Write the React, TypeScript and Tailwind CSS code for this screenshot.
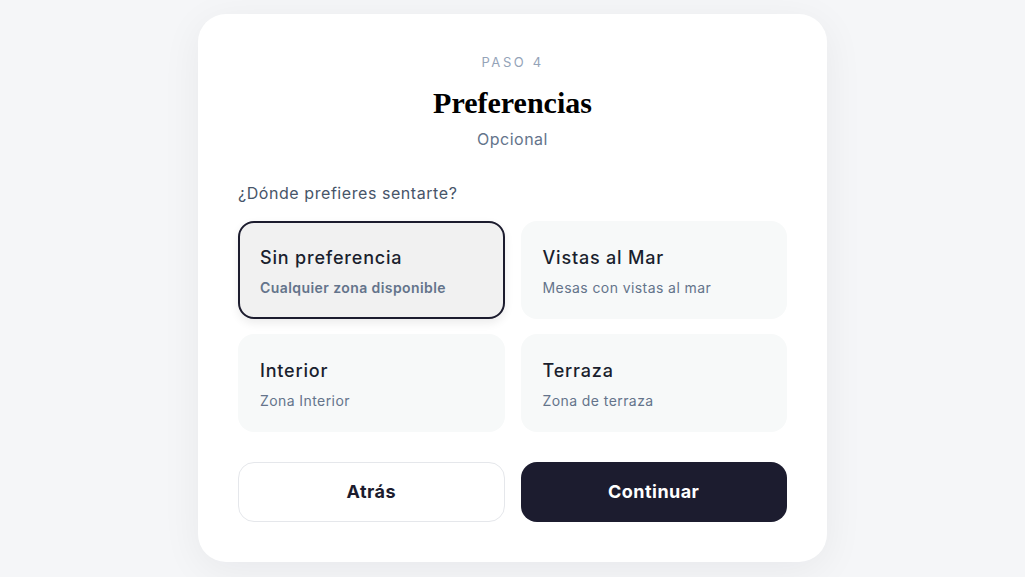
import { useState } from 'react'

const options = [
  { id: 'any', title: 'Sin preferencia', sub: 'Cualquier zona disponible' },
  { id: 'sea', title: 'Vistas al Mar', sub: 'Mesas con vistas al mar' },
  { id: 'inside', title: 'Interior', sub: 'Zona Interior' },
  { id: 'terrace', title: 'Terraza', sub: 'Zona de terraza' },
]

export default function App() {
  const [selected, setSelected] = useState('any')

  return (
    <div className="min-h-screen bg-[#f5f6f8] flex justify-center pt-[14px] font-['Inter',sans-serif]">
      <div className="w-[629px] h-[548px] bg-white rounded-[28px] shadow-[0_8px_40px_rgba(15,23,42,0.06)] px-10 pt-[38px] pb-10">
        <p className="text-center text-[13px] leading-5 tracking-[0.2em] text-[#94a3b8]">PASO 4</p>
        <h1 className="mt-[13px] text-center text-[30px] leading-9 font-bold text-black font-['Liberation_Serif',serif]">
          Preferencias
        </h1>
        <p className="mt-[6px] text-center text-base leading-6 tracking-[0.03em] text-[#64748b]">Opcional</p>

        <p className="mt-[30px] mb-4 text-base leading-6 tracking-[0.035em] text-[#475569]">
          ¿Dónde prefieres sentarte?
        </p>

        <div className="grid grid-cols-2 gap-x-4 gap-y-[15px]">
          {options.map((o) => {
            const active = selected === o.id
            return (
              <button
                key={o.id}
                onClick={() => setSelected(o.id)}
                className={
                  active
                    ? 'text-left rounded-2xl border-2 border-[#1c1c2e] bg-[#f1f1f1] px-5 pt-[21px] pb-[19px] shadow-[0_4px_10px_rgba(0,0,0,0.08)]'
                    : 'text-left rounded-2xl border-2 border-transparent bg-[#f7f9f9] px-5 pt-[21px] pb-[19px]'
                }
              >
                <div className="text-lg leading-7 font-medium tracking-[0.045em] text-[#1a1f2e]">{o.title}</div>
                <div
                  className={
                    active
                      ? 'mt-1.5 text-sm leading-5 font-semibold tracking-[0.03em] text-[#64748b]'
                      : 'mt-1.5 text-sm leading-5 tracking-[0.03em] text-[#64748b]'
                  }
                >
                  {o.sub}
                </div>
              </button>
            )
          })}
        </div>

        <div className="mt-[30px] grid grid-cols-2 gap-4">
          <button className="h-[60px] rounded-2xl border border-[#e5e7eb] bg-white text-lg font-bold tracking-[0.025em] text-[#1c1c2e]">
            Atrás
          </button>
          <button className="h-[60px] rounded-2xl bg-[#1c1c2f] text-lg font-bold tracking-[0.025em] text-white">
            Continuar
          </button>
        </div>
      </div>
    </div>
  )
}
